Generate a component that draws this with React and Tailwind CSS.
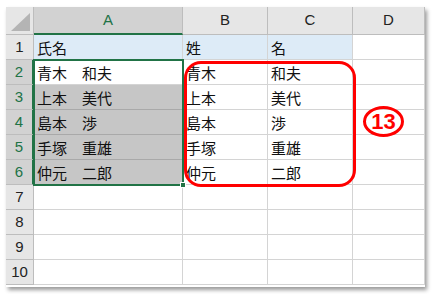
import React from "react";

const cols = [
  { key: "A", w: "w-[149px]" },
  { key: "B", w: "w-[85px]" },
  { key: "C", w: "w-[85px]" },
  { key: "D", w: "w-[72px]" },
];

const rows = [
  ["氏名", "姓", "名", ""],
  ["青木　和夫", "青木", "和夫", ""],
  ["上本　美代", "上本", "美代", ""],
  ["島本　渉", "島本", "渉", ""],
  ["手塚　重雄", "手塚", "重雄", ""],
  ["仲元　二郎", "仲元", "二郎", ""],
  ["", "", "", ""],
  ["", "", "", ""],
  ["", "", "", ""],
  ["", "", "", ""],
];

function cellBg(r, c) {
  if (r === 0 && c < 3) return "bg-[#ddebf7]";
  if (c === 0 && r >= 2 && r <= 5) return "bg-[#c6c6c6] border-b-[#a9a9a9]";
  return "bg-white";
}

export default function App() {
  return (
    <div className="w-[436px] h-[294px] bg-white pl-[6px] pt-[7px]">
      <div className="relative w-[419px] h-[280px] bg-white shadow-[2px_3px_4px_rgba(0,0,0,0.4)] font-['Noto_Sans_CJK_JP',sans-serif] text-[15px] text-[#111] overflow-hidden">
        {/* header row */}
        <div className="flex h-[28px]">
          <div className="w-[28px] h-full bg-[#e6e6e6] border-r border-b border-[#bdbdbd] flex items-end justify-end p-[3px]">
            <svg width="19" height="18" viewBox="0 0 19 18">
              <polygon points="19,0 19,18 0,18" fill="#b4b4b4" />
            </svg>
          </div>
          {cols.map((c, i) => (
            <div
              key={c.key}
              className={`${c.w} h-full flex items-center justify-center font-['Liberation_Sans',sans-serif] text-[15px] border-r border-[#bdbdbd] ${
                i === 0
                  ? "bg-[#d2d2d2] text-[#217346] border-b-2 border-b-[#217346]"
                  : "bg-[#e6e6e6] text-[#222] border-b border-b-[#bdbdbd]"
              }`}
            >
              {c.key}
            </div>
          ))}
        </div>
        {rows.map((row, r) => {
          const sel = r >= 1 && r <= 5;
          return (
            <div key={r} className="flex h-[25px]">
              <div
                className={`w-[28px] h-full flex items-center justify-center font-['Liberation_Sans',sans-serif] text-[15px] border-b border-[#bdbdbd] ${
                  sel
                    ? "bg-[#d2d2d2] text-[#217346] border-r-2 border-r-[#217346]"
                    : "bg-[#e6e6e6] text-[#222] border-r border-r-[#bdbdbd]"
                }`}
              >
                {r + 1}
              </div>
              {row.map((v, c) => (
                <div
                  key={c}
                  className={`${cols[c].w} h-full border-r border-b border-[#d4d4d4] ${cellBg(r, c)} flex items-center pl-[3px] whitespace-pre leading-none`}
                >
                  {v}
                </div>
              ))}
            </div>
          );
        })}

        {/* selection A2:A6 */}
        <div className="absolute left-[27px] top-[52px] w-[151px] h-[127px] border-2 border-[#217346]" />
        <div className="absolute left-[174px] top-[175px] w-[6px] h-[6px] bg-[#217346] border border-white" />

        {/* red frame around B2:C6 */}
        <div className="absolute left-[178px] top-[54px] w-[172px] h-[126px] border-[3.5px] border-[#ff0000] rounded-[17px]" />

        {/* circled number */}
        <div className="absolute left-[357px] top-[99px] w-[41px] h-[31px] rounded-[50%] border-[3px] border-[#ff0000] flex items-center justify-center text-[#ff0000] font-['Liberation_Sans',sans-serif] font-bold text-[22px] leading-none">
          13
        </div>
      </div>
    </div>
  );
}
